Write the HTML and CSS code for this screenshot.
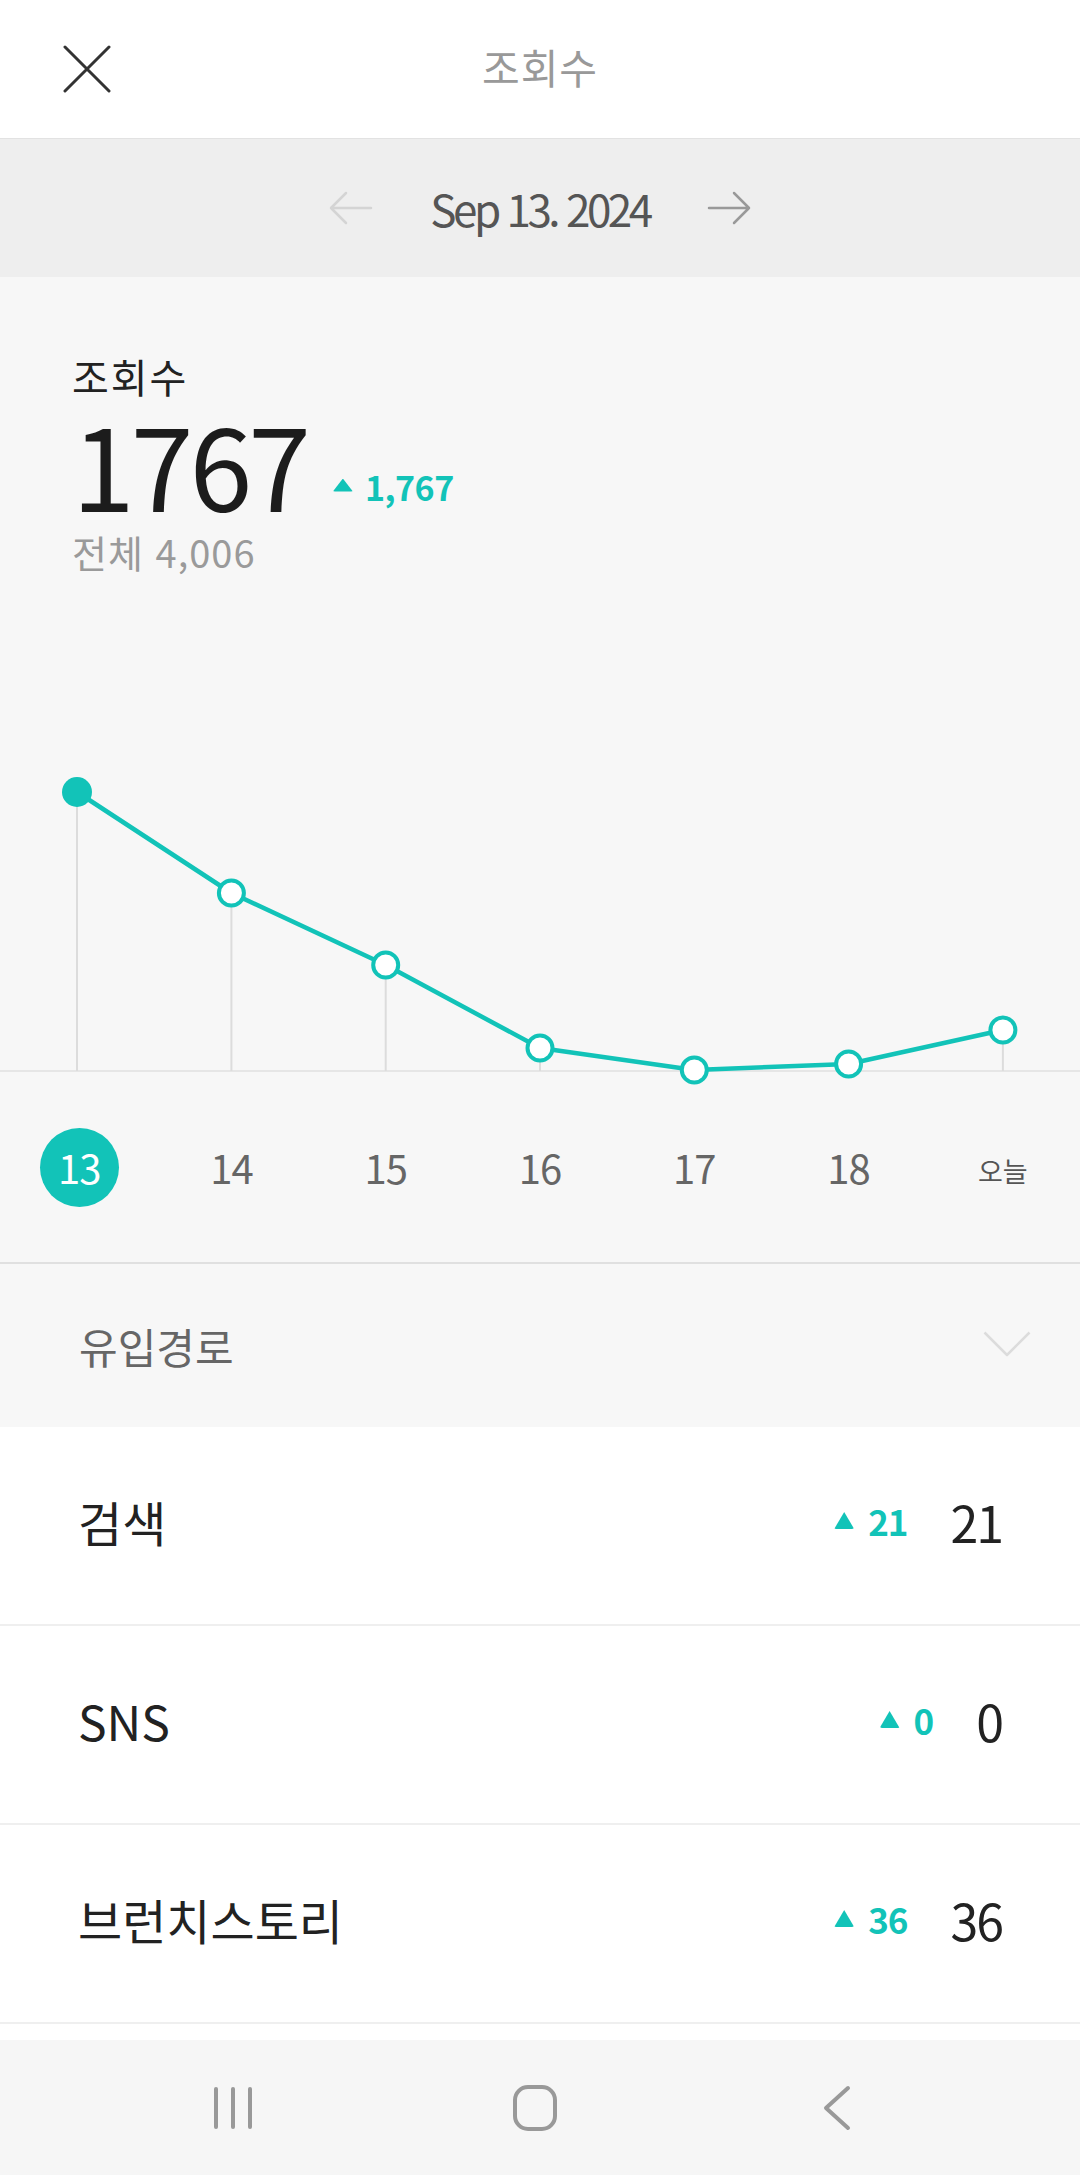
FILE: index.html
```html
<!DOCTYPE html>
<html lang="ko">
<head>
<meta charset="utf-8">
<title>조회수</title>
<link rel="stylesheet" href="styles.css">
</head>
<body>
<div class="app">
  <header class="topbar">
    <div class="topbar-left">
      <svg class="icon-close" width="48" height="48" viewBox="0 0 48 48"><path d="M2 2L46 46M46 2L2 46" stroke="#333" stroke-width="3" stroke-linecap="round"/></svg>
    </div>
    <h1 class="topbar-title">조회수</h1>
    <div class="topbar-right"></div>
  </header>

  <div class="datebar">
    <svg class="arrow" width="44" height="36" viewBox="0 0 44 36"><path d="M42 18H2M17 3L2 18L17 33" fill="none" stroke="#d4d4d4" stroke-width="2.5" stroke-linecap="round" stroke-linejoin="round"/></svg>
    <span class="date">Sep 13. 2024</span>
    <svg class="arrow" width="44" height="36" viewBox="0 0 44 36"><path d="M2 18H42M27 3L42 18L27 33" fill="none" stroke="#999" stroke-width="2.5" stroke-linecap="round" stroke-linejoin="round"/></svg>
  </div>

  <section class="summary">
    <div class="summary-info">
      <div class="label">조회수</div>
      <div class="count-row">
        <span class="count">1767</span>
        <span class="delta delta-lg"><i class="tri tri-lg"></i><b>1,767</b></span>
      </div>
      <div class="total">전체 4,006</div>
    </div>

    <svg class="chart" width="1080" height="520" viewBox="0 0 1080 520">
      <line x1="0" y1="491" x2="1080" y2="491" stroke="#e6e6e6" stroke-width="2"/>
      <g stroke="#dcdcdc" stroke-width="2">
        <line x1="77" y1="212" x2="77" y2="491"/>
        <line x1="231.4" y1="313" x2="231.4" y2="491"/>
        <line x1="385.7" y1="385" x2="385.7" y2="491"/>
        <line x1="540" y1="468" x2="540" y2="491"/>
        <line x1="1002.9" y1="450" x2="1002.9" y2="491"/>
      </g>
      <polyline points="77,212 231.4,313 385.7,385 540,468 694.3,490 848.6,484 1002.9,450" fill="none" stroke="#12c3b8" stroke-width="4.5" stroke-linejoin="round"/>
      <circle cx="77" cy="212" r="15" fill="#12c3b8"/>
      <g fill="#fff" stroke="#12c3b8" stroke-width="4">
        <circle cx="231.4" cy="313" r="12.5"/>
        <circle cx="385.7" cy="385" r="12.5"/>
        <circle cx="540" cy="468" r="12.5"/>
        <circle cx="694.3" cy="490" r="12.5"/>
        <circle cx="848.6" cy="484" r="12.5"/>
        <circle cx="1002.9" cy="450" r="12.5"/>
      </g>
    </svg>

    <div class="days">
      <span class="day day-active">13</span>
      <span class="day">14</span>
      <span class="day">15</span>
      <span class="day">16</span>
      <span class="day">17</span>
      <span class="day">18</span>
      <span class="day day-today">오늘</span>
    </div>
  </section>

  <div class="source-head">
    <span class="source-title">유입경로</span>
    <svg class="chevron" width="48" height="26" viewBox="0 0 48 26"><path d="M1.5 1.5L24 24L46.5 1.5" fill="none" stroke="#dcdcdc" stroke-width="2.5" stroke-linejoin="round"/></svg>
  </div>

  <ul class="rows">
    <li class="row">
      <span class="row-label">검색</span>
      <span class="row-values"><span class="delta"><i class="tri"></i><b>21</b></span><span class="value">21</span></span>
    </li>
    <li class="row">
      <span class="row-label">SNS</span>
      <span class="row-values"><span class="delta"><i class="tri"></i><b>0</b></span><span class="value">0</span></span>
    </li>
    <li class="row">
      <span class="row-label">브런치스토리</span>
      <span class="row-values"><span class="delta"><i class="tri"></i><b>36</b></span><span class="value">36</span></span>
    </li>
  </ul>
  <div class="spacer"></div>

  <nav class="navbar">
    <span class="nav-item">
      <svg width="44" height="44" viewBox="0 0 44 44"><g stroke="#999" stroke-width="4" stroke-linecap="round"><path d="M5 3V41"/><path d="M22 3V41"/><path d="M39 3V41"/></g></svg>
    </span>
    <span class="nav-item">
      <svg width="46" height="48" viewBox="0 0 46 48"><rect x="3" y="3" width="40" height="42" rx="13" fill="none" stroke="#999" stroke-width="4"/></svg>
    </span>
    <span class="nav-item">
      <svg width="30" height="46" viewBox="0 0 30 46"><path d="M26 3L4 23L26 43" fill="none" stroke="#999" stroke-width="4" stroke-linecap="round" stroke-linejoin="round"/></svg>
    </span>
  </nav>
</div>
</body>
</html>
```

FILE: styles.css
```css
* { box-sizing: border-box; }
html, body { margin: 0; padding: 0; }
body {
  width: 1080px;
  height: 2175px;
  overflow: hidden;
  background: #fff;
  font-family: "Noto Sans CJK KR", "Noto Sans", sans-serif;
  color: #222;
}
.app { width: 1080px; display: flex; flex-direction: column; }

.topbar {
  height: 139px;
  display: grid;
  grid-template-columns: 1fr auto 1fr;
  align-items: center;
  border-bottom: 1px solid #e2e2e2;
  background: #fff;
}
.topbar-left { padding-left: 63px; display: flex; align-items: center; }
.icon-close { display: block; }
.topbar-title {
  margin: 0 0 6px 0;
  font-size: 41px;
  line-height: 41px;
  font-weight: 400;
  color: #999;
  letter-spacing: 1px;
}

.datebar {
  height: 138px;
  background: #eeeeee;
  display: flex;
  align-items: center;
  justify-content: center;
  gap: 57px;
}
.arrow { display: block; }
.date {
  font-size: 44px;
  line-height: 44px;
  color: #555;
  letter-spacing: -3.5px;
}

.summary {
  background: #f7f7f7;
  padding-top: 80px;
  padding-bottom: 28px;
  border-bottom: 2px solid #e0e0e0;
  display: flex;
  flex-direction: column;
}
.summary-info { padding-left: 72px; display: flex; flex-direction: column; }
.label { font-size: 40px; line-height: 38px; color: #222; letter-spacing: 2px; }
.count-row {
  margin-top: 12px;
  display: flex;
  align-items: flex-end;
  gap: 26px;
}
.count {
  font-size: 113px;
  line-height: 113px;
  letter-spacing: -4px;
  color: #1c1c1c;
}
.delta {
  display: flex;
  align-items: center;
  color: #12c3b8;
}
.delta b { font-weight: 700; }
.delta-lg { gap: 12px; margin-bottom: 16px; }
.delta-lg b { font-size: 34px; line-height: 34px; letter-spacing: -0.5px; }
.tri {
  display: block;
  width: 20px;
  height: 17px;
  background: #12c3b8;
  clip-path: polygon(50% 0, 100% 100%, 0 100%);
  border-radius: 2px;
}
.tri-lg { height: 13px; margin-top: -4px; }
.total {
  margin-top: 13px;
  font-size: 38px;
  line-height: 37px;
  color: #9a9a9a;
  letter-spacing: 1px;
}

.chart { display: block; margin-top: 10px; }

.days {
  height: 134px;
  display: grid;
  grid-template-columns: repeat(7, 1fr);
  align-items: center;
  justify-items: center;
}
.day {
  font-size: 40px;
  line-height: 40px;
  color: #666;
  letter-spacing: -1px;
}
.day-active {
  width: 79px;
  height: 79px;
  border-radius: 50%;
  background: #12c3b8;
  color: #fff;
  display: flex;
  align-items: center;
  justify-content: center;
  margin-left: 4px;
}
.day-today { font-size: 27px; line-height: 27px; letter-spacing: 0; color: #555; padding-top: 6px; }

.source-head {
  height: 163px;
  background: #f7f7f7;
  display: flex;
  align-items: center;
  justify-content: space-between;
  padding-left: 79px;
  padding-right: 49px;
}
.source-title { font-size: 42px; line-height: 42px; color: #666; }
.chevron { display: block; margin-top: -3px; }

.rows { list-style: none; margin: 0; padding: 0; background: #fff; }
.row {
  height: 199px;
  border-bottom: 2px solid #efefef;
  display: flex;
  align-items: center;
  justify-content: space-between;
  padding-left: 78px;
  padding-right: 78px;
  padding-bottom: 10px;
}
.row-label { font-size: 48px; line-height: 48px; color: #222; }
.row-values { display: flex; align-items: center; gap: 43px; }
.row .delta { gap: 14px; }
.row .delta b { font-size: 35px; line-height: 35px; letter-spacing: -1px; }
.value { font-size: 50px; line-height: 50px; letter-spacing: -2px; color: #222; }

.spacer { height: 16px; background: #fff; }

.navbar {
  height: 135px;
  background: #f6f6f6;
  display: grid;
  grid-template-columns: repeat(3, 302px);
  justify-content: center;
  align-items: center;
  justify-items: center;
  padding-right: 10px;
}
.nav-item { display: flex; }
.nav-item svg { display: block; }
```
